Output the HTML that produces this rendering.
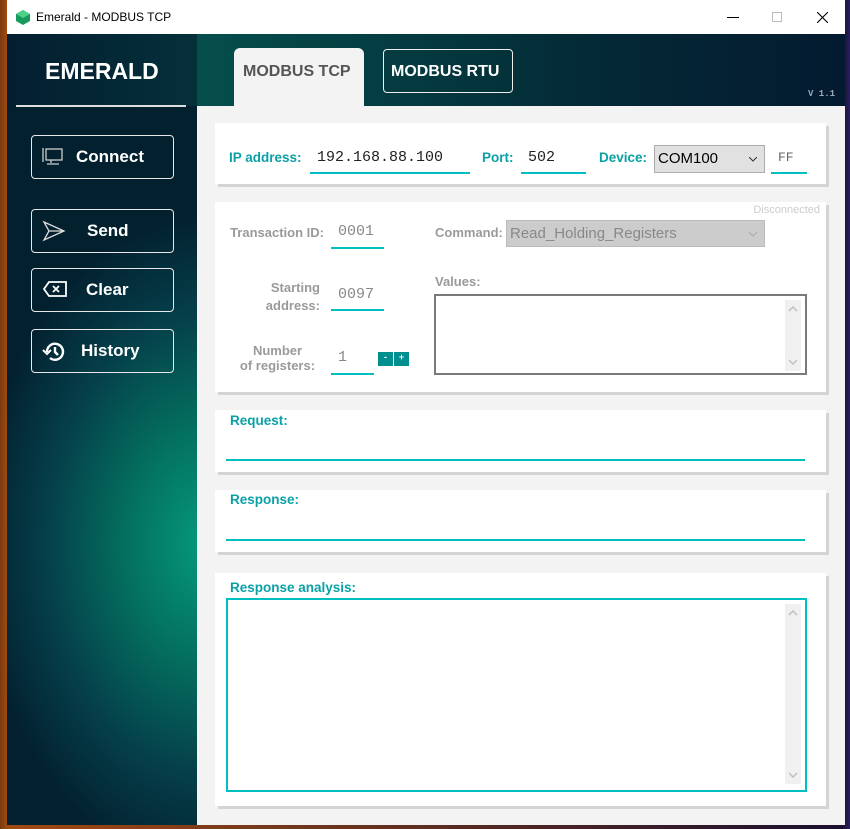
<!DOCTYPE html>
<html><head><meta charset="utf-8"><style>
*{box-sizing:border-box;margin:0;padding:0}
body{width:850px;height:829px;overflow:hidden;background:linear-gradient(90deg,#7a3a10 0,#a04a12 7px,#1a1030 843px,#2b2060 850px);font-family:"Liberation Sans",sans-serif;position:relative}
.win{position:absolute;left:7px;top:0;width:838px;height:825px;background:#f3f3f3}
.title{position:absolute;left:0;top:0;width:838px;height:34px;background:#fff;font-size:12px;color:#000}
.side{position:absolute;left:0;top:34px;width:190px;height:791px;background:radial-gradient(ellipse 230px 330px at 200px 510px,#059a7c 0%,#04705f 35%,#053f4a 70%,#03202f 100%),#03202f}
.head{position:absolute;left:190px;top:34px;width:648px;height:72px;background:linear-gradient(90deg,#054e4c,#042a36 60%,#041a30)}
.btn{position:absolute;left:24px;width:143px;height:44px;border:1.5px solid #e8e8e8;border-radius:4px;color:#fff;font-weight:bold;font-size:17px}
.btn span{position:absolute;top:11px}
.btn svg{position:absolute;left:10px;top:10px}
.panel{position:absolute;left:208px;background:#fff;width:611px;box-shadow:3px 3px 0 #d4d4d4}
.lbl{position:absolute;color:#0aa1a6;font-weight:bold;font-size:13.5px}
.gl{position:absolute;color:#9a9a9a;font-weight:bold;font-size:13px;text-align:right}
.in{position:absolute;border-bottom:2px solid #00bfc0;font-family:"Liberation Mono",monospace;font-size:15px;color:#222;padding-left:7px}
.sb{position:absolute;right:4px;top:4px;width:16px;background:#f0f0f0}
.sb svg{position:absolute;left:3px}
</style></head><body>
<div class="win">
<div class="title">
<svg style="position:absolute;left:9px;top:10px" width="14" height="15" viewBox="0 0 14 15"><polygon points="7,0 14,4 14,11 7,15 0,11 0,4" fill="#1a9a5a"/><polygon points="7,0 14,4 7,8 0,4" fill="#4fd08a"/></svg>
<span style="position:absolute;left:29px;top:10px">Emerald - MODBUS TCP</span>
<div style="position:absolute;left:720px;top:17px;width:12px;height:1px;background:#000"></div>
<div style="position:absolute;left:765px;top:12px;width:10px;height:10px;border:1px solid #bbb"></div>
<svg style="position:absolute;left:810px;top:12px" width="11" height="11"><path d="M0 0L11 11M11 0L0 11" stroke="#000" stroke-width="1.1"/></svg>
</div>
<div class="side"></div>
<div class="head"></div>
<div style="position:absolute;left:0;top:34px;width:190px;height:72px;background:linear-gradient(90deg,#031e30,#05303a)"></div>
<div style="position:absolute;left:38px;top:58px;color:#fff;font-weight:bold;font-size:23px">EMERALD</div>
<div style="position:absolute;left:9px;top:105px;width:170px;height:1.5px;background:#ddd"></div>
<div style="position:absolute;left:227px;top:48px;width:130px;height:60px;background:#f3f3f3;border-radius:6px 6px 0 0"></div>
<div style="position:absolute;left:236px;top:63px;color:#555;font-weight:bold;font-size:16px">MODBUS TCP</div>
<div style="position:absolute;left:376px;top:49px;width:130px;height:44px;border:1.5px solid #eee;border-radius:4px;color:#fff;font-weight:bold;font-size:16px;padding:13px 0 0 7px">MODBUS RTU</div>
<div style="position:absolute;left:801px;top:89px;color:#9ab;font-family:'Liberation Mono',monospace;font-size:9px;font-weight:bold">V 1.1</div>
<div style="position:absolute;left:190px;top:106px;width:648px;height:719px;background:#f3f3f3"></div>

<div class="btn" style="top:135px"><svg width="22" height="20" viewBox="0 0 22 20" fill="none" stroke="#ccc" stroke-width="1.3"><rect x="4" y="3" width="16" height="11"/><path d="M1 2v14M9 14v3M5 18h12"/></svg><span style="left:44px">Connect</span></div>
<div class="btn" style="top:209px"><svg width="24" height="22" viewBox="0 0 24 22" fill="none" stroke="#ddd" stroke-width="1.3"><path d="M2 2L22 11L2 20L7 11Z M7 11H22"/></svg><span style="left:55px">Send</span></div>
<div class="btn" style="top:268px"><svg width="26" height="20" viewBox="0 0 26 20" fill="none" stroke="#fff" stroke-width="1.8"><path d="M7 3H24V17H7L2 10Z M11 7L17 13M17 7L11 13"/></svg><span style="left:54px">Clear</span></div>
<div class="btn" style="top:329px"><svg width="26" height="24" viewBox="0 0 26 24" fill="none" stroke="#fff" stroke-width="2.4"><path d="M5 12A8 8 0 1 1 8 18"/><path d="M1 10L5 14L9 10" stroke-width="2"/><path d="M13 7V12L16 15"/></svg><span style="left:49px">History</span></div>

<div class="panel" style="top:123px;height:61px">
<div class="lbl" style="left:14px;top:27px">IP address:</div>
<div class="in" style="left:95px;top:23px;width:160px;height:28px;padding-top:3px">192.168.88.100</div>
<div class="lbl" style="left:267px;top:27px">Port:</div>
<div class="in" style="left:306px;top:23px;width:65px;height:28px;padding-top:3px">502</div>
<div class="lbl" style="left:384px;top:27px">Device:</div>
<div style="position:absolute;left:439px;top:22px;width:111px;height:28px;background:#e1e1e1;border:1px solid #adadad;font-size:15px;padding:4px 3px">COM100<svg style="position:absolute;right:7px;top:11px" width="8" height="5"><path d="M0 0L4 4L8 0" fill="none" stroke="#333"/></svg></div>
<div class="in" style="left:556px;top:23px;width:36px;height:28px;padding-top:4px;font-size:13px;color:#666">FF</div>
</div>

<div class="panel" style="top:202px;height:190px">
<div style="position:absolute;right:6px;top:2px;color:#ccc;font-size:11px">Disconnected</div>
<div class="gl" style="left:0;width:109px;top:23px">Transaction ID:</div>
<div class="in" style="left:116px;top:18px;width:53px;height:29px;padding-top:3px;color:#888">0001</div>
<div class="gl" style="left:0;width:105px;top:77px;line-height:18px">Starting<br>address:</div>
<div class="in" style="left:116px;top:81px;width:53px;height:28px;padding-top:3px;color:#888">0097</div>
<div class="gl" style="left:0;width:107px;top:141px;line-height:15px;text-align:center;padding-left:18px">Number<br>of registers:</div>
<div class="in" style="left:116px;top:144px;width:43px;height:29px;padding-top:3px;color:#888">1</div>
<div style="position:absolute;left:163px;top:150px;width:15px;height:14px;background:#008f8f;color:#fff;font-size:9px;text-align:center;font-weight:bold">-</div>
<div style="position:absolute;left:179px;top:150px;width:15px;height:14px;background:#008f8f;color:#fff;font-size:9px;text-align:center;font-weight:bold">+</div>
<div class="gl" style="left:220px;top:23px">Command:</div>
<div style="position:absolute;left:291px;top:18px;width:259px;height:27px;background:#ccc;border:1px solid #bbb;color:#888;font-size:15px;padding:4px 3px">Read_Holding_Registers<svg style="position:absolute;right:7px;top:11px" width="8" height="5"><path d="M0 0L4 4L8 0" fill="none" stroke="#aaa"/></svg></div>
<div class="gl" style="left:220px;top:72px;font-size:13px">Values:</div>
<div style="position:absolute;left:219px;top:92px;width:373px;height:81px;border:2px solid #7a7a7a;background:#fff"><div class="sb" style="height:71px"><svg style="top:6px" width="10" height="6"><path d="M1 5L5 1L9 5" fill="none" stroke="#c0c0c0" stroke-width="1.5"/></svg><svg style="bottom:6px" width="10" height="6"><path d="M1 1L5 5L9 1" fill="none" stroke="#c0c0c0" stroke-width="1.5"/></svg></div></div>
</div>

<div class="panel" style="top:410px;height:62px">
<div class="lbl" style="left:15px;top:3px">Request:</div>
<div style="position:absolute;left:11px;top:49px;width:579px;height:2px;background:#00bfc0"></div>
</div>
<div class="panel" style="top:490px;height:62px">
<div class="lbl" style="left:15px;top:2px">Response:</div>
<div style="position:absolute;left:11px;top:49px;width:579px;height:2px;background:#00bfc0"></div>
</div>
<div class="panel" style="top:573px;height:233px">
<div class="lbl" style="left:15px;top:7px">Response analysis:</div>
<div style="position:absolute;left:11px;top:25px;width:581px;height:194px;border:2px solid #00bfc0;background:#fff"><div class="sb" style="height:180px"><svg style="top:6px" width="10" height="6"><path d="M1 5L5 1L9 5" fill="none" stroke="#c0c0c0" stroke-width="1.5"/></svg><svg style="bottom:6px" width="10" height="6"><path d="M1 1L5 5L9 1" fill="none" stroke="#c0c0c0" stroke-width="1.5"/></svg></div></div>
</div>
</div>
</body></html>
